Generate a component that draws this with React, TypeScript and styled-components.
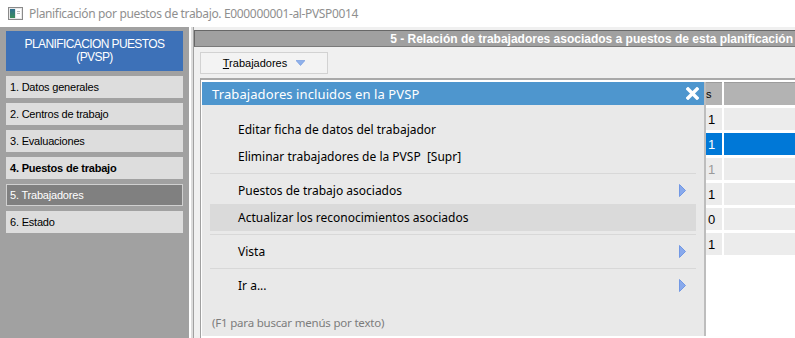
import React from 'react';
import styled, { createGlobalStyle } from 'styled-components';

const GlobalStyle = createGlobalStyle`
  html, body {
    margin: 0;
    padding: 0;
    background: #ffffff;
    overflow: hidden;
  }
  * {
    box-sizing: border-box;
  }
`;

const uiFont = `"Noto Sans", "Open Sans", sans-serif`;
const classicFont = `"Liberation Sans", Arial, sans-serif`;

const Window = styled.div`
  width: 795px;
  height: 338px;
  display: flex;
  flex-direction: column;
  background: #ffffff;
`;

const TitleBar = styled.div`
  height: 27px;
  display: flex;
  align-items: center;
  gap: 6px;
  padding-left: 8px;
  font-family: ${uiFont};
  font-size: 12px;
  letter-spacing: -0.35px;
  color: #8f8f8f;
  background: #ffffff;
`;

const Main = styled.div`
  flex: 1;
  display: flex;
  min-height: 0;
`;

const Sidebar = styled.div`
  width: 189px;
  background: #a1a1a1;
  padding: 4px 6px 0 6px;
  display: flex;
  flex-direction: column;
  gap: 5px;
`;

const SidebarHeader = styled.div`
  height: 40px;
  background: #3d71b8;
  color: #ffffff;
  font-family: ${classicFont};
  font-size: 12px;
  letter-spacing: -0.6px;
  line-height: 13px;
  text-align: center;
  display: flex;
  flex-direction: column;
  justify-content: center;
`;

interface IStep {
  active?: boolean;
  done?: boolean;
}

const Step = styled.div<IStep>`
  height: 22px;
  display: flex;
  align-items: center;
  font-family: ${classicFont};
  font-size: 11px;
  letter-spacing: -0.2px;
  font-weight: ${(props) => (props.done ? 'bold' : 'normal')};
  color: ${(props) => (props.active ? '#ffffff' : '#000000')};
  background: ${(props) => (props.active ? '#808080' : '#dddddd')};
  border: ${(props) => (props.active ? '1px solid #d0d0d0' : 'none')};
  padding-left: ${(props) => (props.active ? '3px' : '4px')};
`;

const Divider = styled.div`
  width: 5px;
  background: linear-gradient(to right, #ffffff 0 2px, #dcdcdc 2px 4px, #a0a0a0 4px 5px);
`;

const Content = styled.div`
  flex: 1;
  position: relative;
  background: #f0f0f0;
  display: flex;
  flex-direction: column;
  overflow: hidden;
`;

const HeaderBar = styled.div`
  margin-top: 3px;
  height: 17px;
  background: #a0a0a0;
  border-top: 1px solid #676767;
  border-left: 1px solid #676767;
  border-bottom: 1px solid #7a7a7a;
  color: #ffffff;
  font-family: ${classicFont};
  font-size: 12px;
  font-weight: bold;
  white-space: nowrap;
  display: flex;
  align-items: center;
  justify-content: flex-end;
  padding-right: 2px;
`;

const Toolbar = styled.div`
  padding: 5px 0 0 6px;
  display: flex;
`;

const DropButton = styled.div`
  width: 128px;
  height: 22px;
  display: flex;
  align-items: center;
  justify-content: center;
  gap: 9px;
  background: #f3f3f3;
  border: 1px solid #d2d2d2;
  font-family: ${classicFont};
  font-size: 11px;
  color: #000000;

  u {
    text-decoration: underline;
  }
`;

const GridFrame = styled.div`
  margin: 4px 0 0 6px;
  flex: 1;
  border-top: 2px solid #a9a9a9;
  border-left: 1px solid #a0a0a0;
  padding: 2px 0 0 1px;
  background: #ffffff;
  display: grid;
  grid-template-columns: 502px 16px 1fr;
  grid-auto-rows: 22px;
  grid-template-rows: 23px;
  column-gap: 2px;
  row-gap: 3px;
  align-content: start;
`;

const HeadCell = styled.div`
  background: #b3b3b3;
  border-top: 1px solid #9c9c9c;
  font-family: ${classicFont};
  font-size: 11px;
  color: #000000;
  display: flex;
  align-items: center;
  overflow: hidden;
  white-space: nowrap;
`;

interface ICell {
  selected?: boolean;
  muted?: boolean;
}

const Cell = styled.div<ICell>`
  background: ${(props) => (props.selected ? '#0078d7' : '#ececec')};
  color: ${(props) => (props.selected ? '#ffffff' : props.muted ? '#9a9a9a' : '#000000')};
  font-family: ${classicFont};
  font-size: 13px;
  display: flex;
  align-items: center;
  padding-left: 2px;
`;

const PopupMenu = styled.div`
  position: absolute;
  left: 8px;
  top: 55px;
  width: 504px;
  height: 254px;
  background: #e9e9e9;
  border-right: 2px solid #bdbdbd;
  display: flex;
  flex-direction: column;
`;

const MenuTitle = styled.div`
  height: 23px;
  background: #4e96ce;
  color: #ffffff;
  font-family: ${uiFont};
  font-size: 13px;
  letter-spacing: 0.1px;
  display: flex;
  align-items: center;
  justify-content: space-between;
  padding: 0 5px 0 10px;
`;

const MenuBody = styled.div`
  flex: 1;
  display: flex;
  flex-direction: column;
  padding: 11px 8px 3px 8px;
`;

interface IMenuItem {
  hover?: boolean;
}

const MenuItem = styled.div<IMenuItem>`
  height: 27px;
  display: flex;
  align-items: center;
  justify-content: space-between;
  padding: 0 10px 0 28px;
  background: ${(props) => (props.hover ? '#dadada' : 'transparent')};
  font-family: ${uiFont};
  font-size: 12px;
  color: #000000;
`;

const MenuSeparator = styled.div`
  height: 1px;
  margin: 3px 0;
  background: #d8d8d8;
`;

const MenuHint = styled.div`
  margin-top: auto;
  height: 22px;
  display: flex;
  align-items: center;
  padding-left: 2px;
  font-family: ${uiFont};
  font-size: 11.5px;
  letter-spacing: -0.2px;
  color: #7c7c7c;
`;

const WindowIcon = () => (
  <svg width="15" height="13" viewBox="0 0 15 13">
    <defs>
      <linearGradient id="wig" x1="0" y1="0" x2="0" y2="1">
        <stop offset="0" stopColor="#2f6f8f" />
        <stop offset="1" stopColor="#3c8f5a" />
      </linearGradient>
    </defs>
    <rect x="0.5" y="0.5" width="14" height="12" fill="#e8e8e8" stroke="#8a8a8a" />
    <rect x="2" y="2" width="5" height="9" fill="url(#wig)" />
    <rect x="8" y="2" width="5" height="9" fill="#ffffff" />
    <rect x="9" y="4" width="3" height="1" fill="#bdbdbd" />
    <rect x="9" y="6" width="3" height="1" fill="#bdbdbd" />
  </svg>
);

const DownArrow = () => (
  <svg width="9" height="6" viewBox="0 0 9 6">
    <polygon points="0,0.5 9,0.5 4.5,5.5" fill="#8fb1ea" stroke="#6b93df" strokeWidth="0.6" />
  </svg>
);

const SubArrow = () => (
  <svg width="7" height="13" viewBox="0 0 7 13">
    <polygon points="0.5,0.5 6.5,6.5 0.5,12.5" fill="#88a9ec" stroke="#5f8be2" strokeWidth="0.8" />
  </svg>
);

const CloseIcon = () => (
  <svg width="13" height="13" viewBox="0 0 13 13">
    <path d="M2 2 L11 11 M11 2 L2 11" stroke="#ffffff" strokeWidth="3.4" strokeLinecap="square" />
  </svg>
);

const steps = [
  { label: '1. Datos generales' },
  { label: '2. Centros de trabajo' },
  { label: '3. Evaluaciones' },
  { label: '4. Puestos de trabajo', done: true },
  { label: '5. Trabajadores', active: true },
  { label: '6. Estado' },
];

const rows = [
  { value: '1' },
  { value: '1', selected: true },
  { value: '1', muted: true },
  { value: '1' },
  { value: '0' },
  { value: '1' },
];

const App: React.FC = () => {
  return (
    <Window>
      <GlobalStyle />
      <TitleBar>
        <WindowIcon />
        <span>Planificación por puestos de trabajo. E000000001-al-PVSP0014</span>
      </TitleBar>
      <Main>
        <Sidebar>
          <SidebarHeader>
            <div>PLANIFICACION PUESTOS</div>
            <div>(PVSP)</div>
          </SidebarHeader>
          {steps.map((step) => (
            <Step key={step.label} active={step.active} done={step.done}>
              {step.label}
            </Step>
          ))}
        </Sidebar>
        <Divider />
        <Content>
          <HeaderBar>5 - Relación de trabajadores asociados a puestos de esta planificación</HeaderBar>
          <Toolbar>
            <DropButton>
              <span>
                <u>T</u>rabajadores
              </span>
              <DownArrow />
            </DropButton>
          </Toolbar>
          <GridFrame>
            <HeadCell />
            <HeadCell>s</HeadCell>
            <HeadCell />
            {rows.map((row, i) => (
              <React.Fragment key={i}>
                <Cell selected={row.selected} />
                <Cell selected={row.selected} muted={row.muted}>
                  {row.value}
                </Cell>
                <Cell selected={row.selected} />
              </React.Fragment>
            ))}
          </GridFrame>
          <PopupMenu>
            <MenuTitle>
              <span>Trabajadores incluidos en la PVSP</span>
              <CloseIcon />
            </MenuTitle>
            <MenuBody>
              <MenuItem>Editar ficha de datos del trabajador</MenuItem>
              <MenuItem>Eliminar trabajadores de la PVSP&nbsp;&nbsp;[Supr]</MenuItem>
              <MenuSeparator />
              <MenuItem>
                <span>Puestos de trabajo asociados</span>
                <SubArrow />
              </MenuItem>
              <MenuItem hover>Actualizar los reconocimientos asociados</MenuItem>
              <MenuSeparator />
              <MenuItem>
                <span>Vista</span>
                <SubArrow />
              </MenuItem>
              <MenuSeparator />
              <MenuItem>
                <span>Ir a...</span>
                <SubArrow />
              </MenuItem>
              <MenuHint>(F1 para buscar menús por texto)</MenuHint>
            </MenuBody>
          </PopupMenu>
        </Content>
      </Main>
    </Window>
  );
};

export default App;
